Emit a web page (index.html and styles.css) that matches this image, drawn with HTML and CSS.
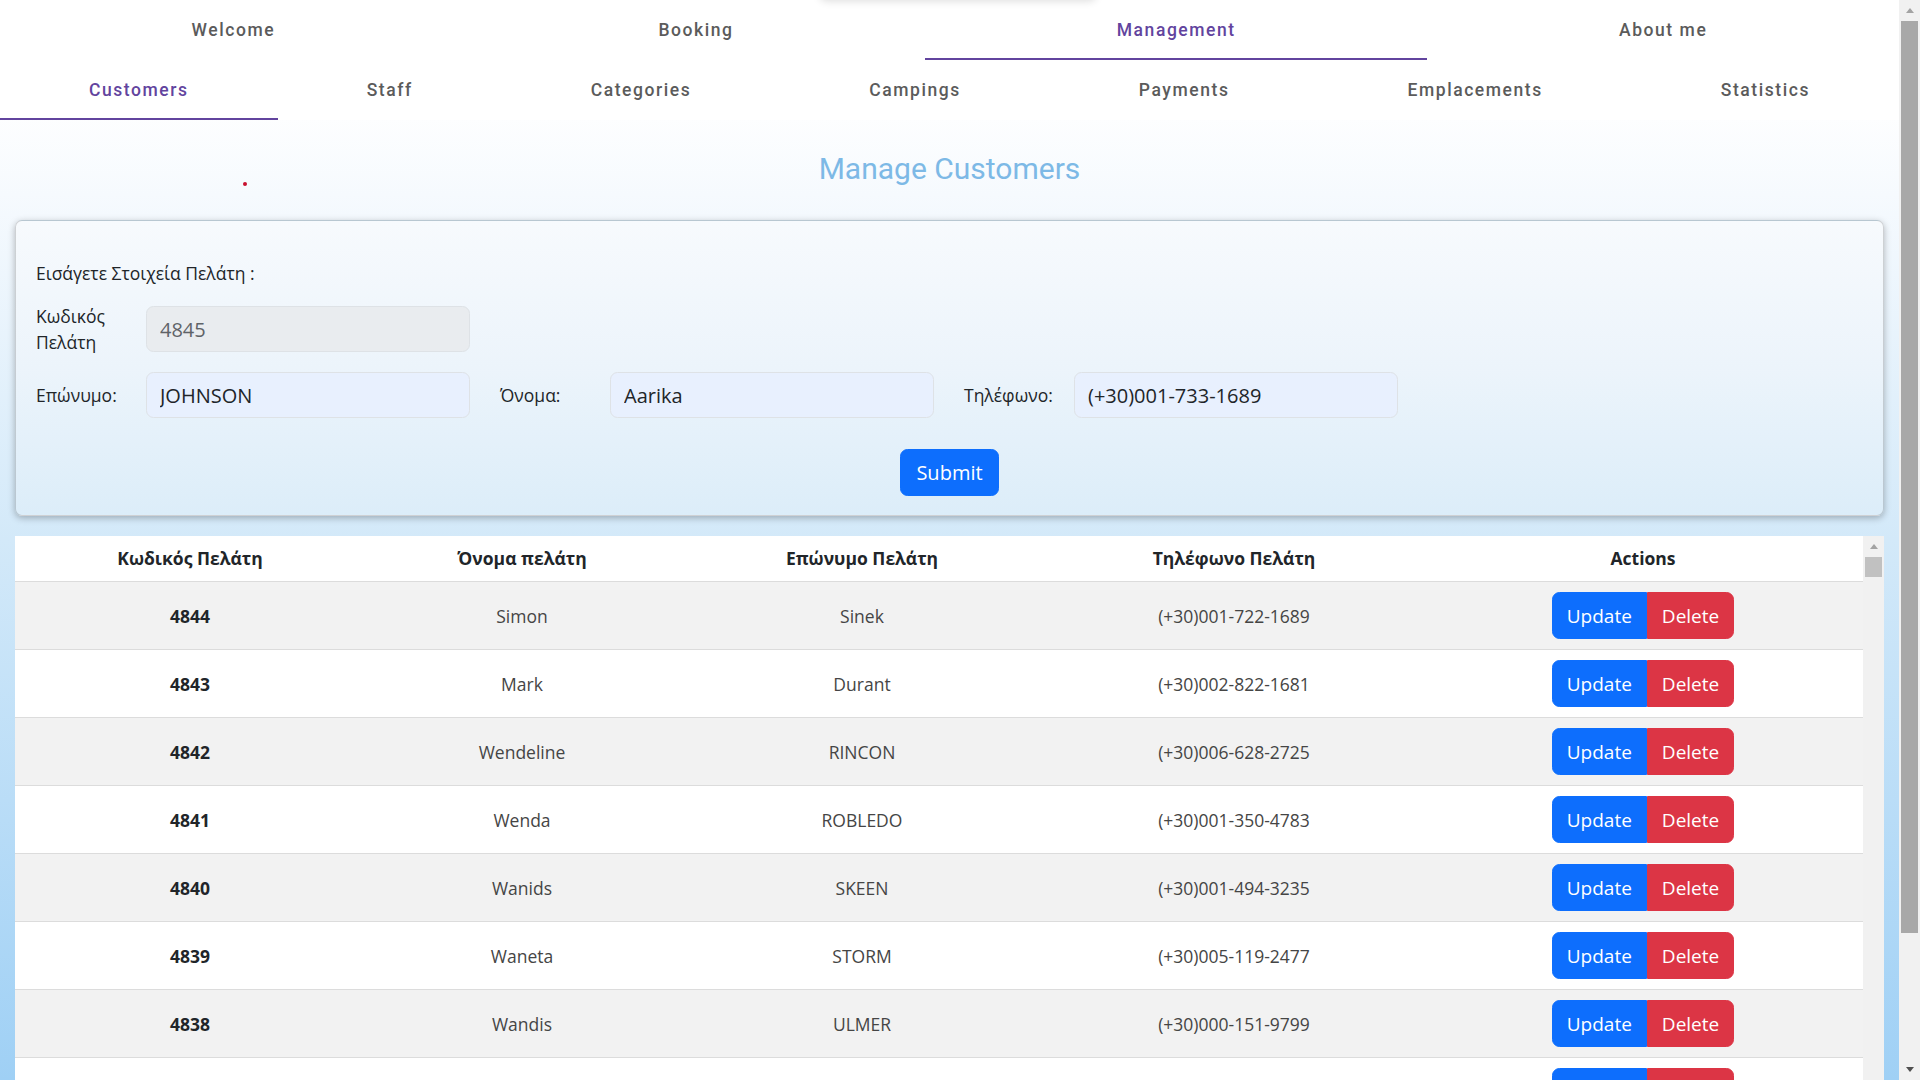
FILE: index.html
```html
<!DOCTYPE html>
<html lang="el">
<head>
<meta charset="utf-8">
<title>Manage Customers</title>
<link rel="stylesheet" href="styles.css">
</head>
<body>
<div class="screen">
  <div class="page">
    <div class="top-glow"></div>
    <nav class="tabs">
      <a class="tab">Welcome</a>
      <a class="tab">Booking</a>
      <a class="tab active">Management</a>
      <a class="tab">About me</a>
    </nav>
    <nav class="tabs">
      <a class="tab active">Customers</a>
      <a class="tab">Staff</a>
      <a class="tab">Categories</a>
      <a class="tab">Campings</a>
      <a class="tab">Payments</a>
      <a class="tab">Emplacements</a>
      <a class="tab">Statistics</a>
    </nav>

    <main class="content">
      <section class="title-area">
        <span class="stray-dot"></span>
        <h2 class="page-title">Manage Customers</h2>
      </section>

      <form class="card">
        <p class="card-heading">Εισάγετε Στοιχεία Πελάτη :</p>
        <div class="form-row">
          <div class="field">
            <label class="field-label">Κωδικός Πελάτη</label>
            <input class="field-input readonly" value="4845" readonly>
          </div>
        </div>
        <div class="form-row">
          <div class="field">
            <label class="field-label">Επώνυμο:</label>
            <input class="field-input filled" value="JOHNSON">
          </div>
          <div class="field">
            <label class="field-label">Όνομα:</label>
            <input class="field-input filled" value="Aarika">
          </div>
          <div class="field">
            <label class="field-label">Τηλέφωνο:</label>
            <input class="field-input filled" value="(+30)001-733-1689">
          </div>
        </div>
        <div class="submit-row">
          <button type="button" class="btn btn-primary btn-submit">Submit</button>
        </div>
      </form>

      <div class="table-box">
        <div class="table-view">
          <table class="customers">
            <colgroup>
              <col class="c-id"><col class="c-name"><col class="c-surname"><col class="c-phone"><col class="c-actions">
            </colgroup>
            <thead>
              <tr><th>Κωδικός Πελάτη</th><th>Όνομα πελάτη</th><th>Επώνυμο Πελάτη</th><th>Τηλέφωνο Πελάτη</th><th>Actions</th></tr>
            </thead>
            <tbody>
              <tr><td class="id">4844</td><td>Simon</td><td>Sinek</td><td>(+30)001-722-1689</td><td><div class="btn-group"><button class="btn btn-primary">Update</button><button class="btn btn-danger">Delete</button></div></td></tr>
              <tr><td class="id">4843</td><td>Mark</td><td>Durant</td><td>(+30)002-822-1681</td><td><div class="btn-group"><button class="btn btn-primary">Update</button><button class="btn btn-danger">Delete</button></div></td></tr>
              <tr><td class="id">4842</td><td>Wendeline</td><td>RINCON</td><td>(+30)006-628-2725</td><td><div class="btn-group"><button class="btn btn-primary">Update</button><button class="btn btn-danger">Delete</button></div></td></tr>
              <tr><td class="id">4841</td><td>Wenda</td><td>ROBLEDO</td><td>(+30)001-350-4783</td><td><div class="btn-group"><button class="btn btn-primary">Update</button><button class="btn btn-danger">Delete</button></div></td></tr>
              <tr><td class="id">4840</td><td>Wanids</td><td>SKEEN</td><td>(+30)001-494-3235</td><td><div class="btn-group"><button class="btn btn-primary">Update</button><button class="btn btn-danger">Delete</button></div></td></tr>
              <tr><td class="id">4839</td><td>Waneta</td><td>STORM</td><td>(+30)005-119-2477</td><td><div class="btn-group"><button class="btn btn-primary">Update</button><button class="btn btn-danger">Delete</button></div></td></tr>
              <tr><td class="id">4838</td><td>Wandis</td><td>ULMER</td><td>(+30)000-151-9799</td><td><div class="btn-group"><button class="btn btn-primary">Update</button><button class="btn btn-danger">Delete</button></div></td></tr>
              <tr><td class="id">4837</td><td>Walton</td><td>TRAVIS</td><td>(+30)004-210-5521</td><td><div class="btn-group"><button class="btn btn-primary">Update</button><button class="btn btn-danger">Delete</button></div></td></tr>
            </tbody>
          </table>
        </div>
        <div class="scrollbar inner">
          <div class="sb-btn"><span class="arrow up"></span></div>
          <div class="sb-track"><div class="sb-thumb"></div></div>
        </div>
      </div>
    </main>
  </div>

  <div class="scrollbar page-scroll">
    <div class="sb-btn"><span class="arrow up"></span></div>
    <div class="sb-track"><div class="sb-thumb"></div></div>
    <div class="sb-btn"><span class="arrow down"></span></div>
  </div>
</div>
</body>
</html>
```

FILE: styles.css
```css
* { box-sizing: border-box; }

html, body {
  margin: 0;
  padding: 0;
  height: 100%;
  overflow: hidden;
}

body {
  font-family: "Open Sans", "Noto Sans", sans-serif;
  font-size: 17.5px;
  line-height: 1.5;
  color: #212529;
}

.screen {
  display: flex;
  width: 1920px;
  height: 1080px;
  overflow: hidden;
}

.page {
  position: relative;
  flex: 1 1 auto;
  min-width: 0;
  height: 1080px;
  overflow: hidden;
  background: linear-gradient(180deg, #ffffff 0%, #ffffff 9%, #f6fafe 18%, #d3e9f9 50%, #9fd0f5 100%);
}

.top-glow {
  position: absolute;
  top: -30px;
  left: 820px;
  width: 276px;
  height: 30px;
  background: #fff;
  border-radius: 6px;
  box-shadow: 0 1px 8px rgba(0, 0, 0, 0.14);
}

/* Tabs */
.tabs {
  display: flex;
  height: 60px;
  background: #fff;
}

.tab {
  position: relative;
  flex: 1 1 auto;
  display: flex;
  align-items: center;
  justify-content: center;
  padding: 0 30px;
  font-family: Roboto, "Liberation Sans", sans-serif;
  font-weight: 500;
  font-size: 17.5px;
  letter-spacing: 1.56px;
  color: #5b5b5b;
  white-space: nowrap;
  cursor: pointer;
}

.tab.active {
  color: #62449e;
}

.tab.active::after {
  content: "";
  position: absolute;
  left: 0;
  right: 0;
  bottom: 0;
  height: 2.5px;
  background: #62449e;
}

/* Content */
.content {
  padding: 0 15px;
}

.title-area {
  position: relative;
  padding: 32px 0 34px;
  text-align: center;
}

.page-title {
  margin: 0;
  font-family: Roboto, "Liberation Sans", sans-serif;
  font-weight: 400;
  font-size: 30px;
  line-height: 34px;
  color: #7db9e6;
}

.stray-dot {
  position: absolute;
  left: 228px;
  top: 62px;
  width: 4px;
  height: 4px;
  border-radius: 50%;
  background: #c8102e;
}

/* Card form */
.card {
  border: 1px solid rgba(0, 0, 0, 0.16);
  border-radius: 7px;
  padding: 20px 20px 19px;
  background: linear-gradient(180deg, #f7fafd 0%, #ecf4fb 50%, #dcedf9 100%);
  box-shadow: 0 2px 7px rgba(0, 0, 0, 0.28);
}

.card-heading {
  margin: 19px 0 20px;
  line-height: 26px;
}

.form-row {
  display: flex;
  gap: 30px;
  margin-bottom: 20px;
}

.form-row + .submit-row { margin-top: 31px; }

.field {
  display: flex;
  align-items: center;
  height: 46px;
}

.field-label {
  width: 110px;
  padding-right: 12px;
  line-height: 26px;
}

.field-input {
  width: 324px;
  height: 46px;
  padding: 0 13px;
  border: 1px solid #dee2e6;
  border-radius: 7.5px;
  font-family: "Open Sans", "Noto Sans", sans-serif;
  font-size: 20px;
  color: #212529;
  outline: none;
}

.field-input.readonly {
  background: #e9ecef;
  color: #5f6368;
}

.field-input.filled {
  background: #e8f0fe;
}

.submit-row {
  display: flex;
  justify-content: center;
}

/* Buttons */
.btn {
  height: 47px;
  padding: 0 14px;
  border: 1px solid transparent;
  border-radius: 7.5px;
  font-family: "Open Sans", "Noto Sans", sans-serif;
  font-size: 19px;
  color: #fff;
  cursor: pointer;
}

.btn-primary { background: #0d6efd; border-color: #0d6efd; }
.btn-danger { background: #dc3545; border-color: #dc3545; }

.btn-submit { padding: 0 15px; font-size: 20px; }

.btn-group {
  display: inline-flex;
  vertical-align: middle;
}

.btn-group .btn:first-child { border-top-right-radius: 0; border-bottom-right-radius: 0; }
.btn-group .btn:last-child { border-top-left-radius: 0; border-bottom-left-radius: 0; }

/* Table */
.table-box {
  display: flex;
  margin-top: 20px;
  height: 700px;
  background: #fff;
}

.table-view {
  flex: 1 1 auto;
  min-width: 0;
  overflow: hidden;
}

.customers {
  width: 100%;
  table-layout: fixed;
  border-collapse: collapse;
  text-align: center;
}

.c-id { width: 350px; }
.c-name { width: 314px; }
.c-surname { width: 366px; }
.c-phone { width: 378px; }
.c-actions { width: 440px; }

.customers th {
  padding: 9px 10px 10px;
  font-weight: 700;
  color: #212529;
  background: #fff;
  border-bottom: 1px solid #dcdcdc;
}

.customers td {
  padding: 10px;
  color: #454545;
  vertical-align: middle;
  border-bottom: 1px solid #dcdcdc;
}

.customers td.id {
  font-weight: 700;
  color: #212529;
}

.customers tbody tr:nth-child(odd) td { background: #f2f2f2; }
.customers tbody tr:nth-child(even) td { background: #fff; }

/* Scrollbars */
.scrollbar {
  display: flex;
  flex-direction: column;
  flex: 0 0 21px;
  width: 21px;
  background: #f1f1f1;
}

.sb-btn {
  flex: 0 0 21px;
  display: flex;
  align-items: center;
  justify-content: center;
}

.sb-track {
  flex: 1 1 auto;
  padding: 0 2px;
}

.sb-thumb {
  height: 20px;
  background: #c1c1c1;
}

.page-scroll .sb-thumb {
  height: 912px;
  background: #a8a8a8;
}

.arrow {
  width: 0;
  height: 0;
  border-left: 4.5px solid transparent;
  border-right: 4.5px solid transparent;
}

.arrow.up { border-bottom: 5px solid #a3a3a3; }
.arrow.down { border-top: 5px solid #505050; }
```
